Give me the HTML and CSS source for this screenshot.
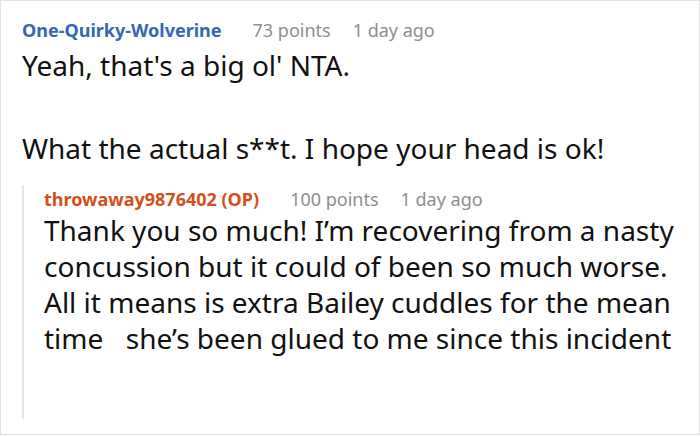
FILE: index.html
```html
<!DOCTYPE html>
<html>
<head>
<meta charset="utf-8">
<link rel="stylesheet" href="styles.css">
</head>
<body>
<div class="frame">
  <div class="comment">
    <div class="meta">
      <span class="user user-blue">One-Quirky-Wolverine</span>
      <span class="info">73 points</span>
      <span class="info">1 day ago</span>
    </div>
    <div class="body">
      <p>Yeah, that's a big ol' NTA.</p>
      <p>What the actual s**t. I hope your head is ok!</p>
    </div>
    <div class="reply">
      <div class="meta">
        <span class="user user-orange">throwaway9876402 (OP)</span>
        <span class="info">100 points</span>
        <span class="info">1 day ago</span>
      </div>
      <div class="body">
        <p>Thank you so much! I’m recovering from a nasty concussion but it could of been so much worse. All it means is extra Bailey cuddles for the mean time <span class="emoji-gap"></span> she’s been glued to me since this incident</p>
      </div>
    </div>
  </div>
</div>
</body>
</html>
```

FILE: styles.css
```css
html, body {
  margin: 0;
  padding: 0;
  background: #fff;
}
.frame {
  width: 700px;
  height: 435px;
  box-sizing: border-box;
  border: 1px solid #e2e2e2;
  padding: 15px 0 0 21px;
  font-family: "Noto Sans", "Open Sans", sans-serif;
  color: #111;
  overflow: hidden;
}
.meta {
  display: flex;
  gap: 22px;
  font-size: 18px;
  line-height: 28px;
}
.user {
  font-weight: 700;
  margin-right: 9px;
}
.user-blue { color: #3567b5; }
.user-orange { color: #d3501c; }
.info { color: #8e8e8e; }
.body {
  margin-top: 3px;
  font-size: 28px;
  line-height: 36px;
}
.body p {
  margin: 0;
}
.comment > .body p + p {
  margin-top: 47px;
}
.emoji-gap {
  display: inline-block;
  width: 8px;
}
.reply {
  margin-top: 32px;
  border-left: 2px solid #e6e6e6;
  padding-left: 20px;
  padding-bottom: 63px;
}
.reply > .meta {
  margin-top: -13px;
}
.reply > .body {
  margin-top: -1px;
}
```
